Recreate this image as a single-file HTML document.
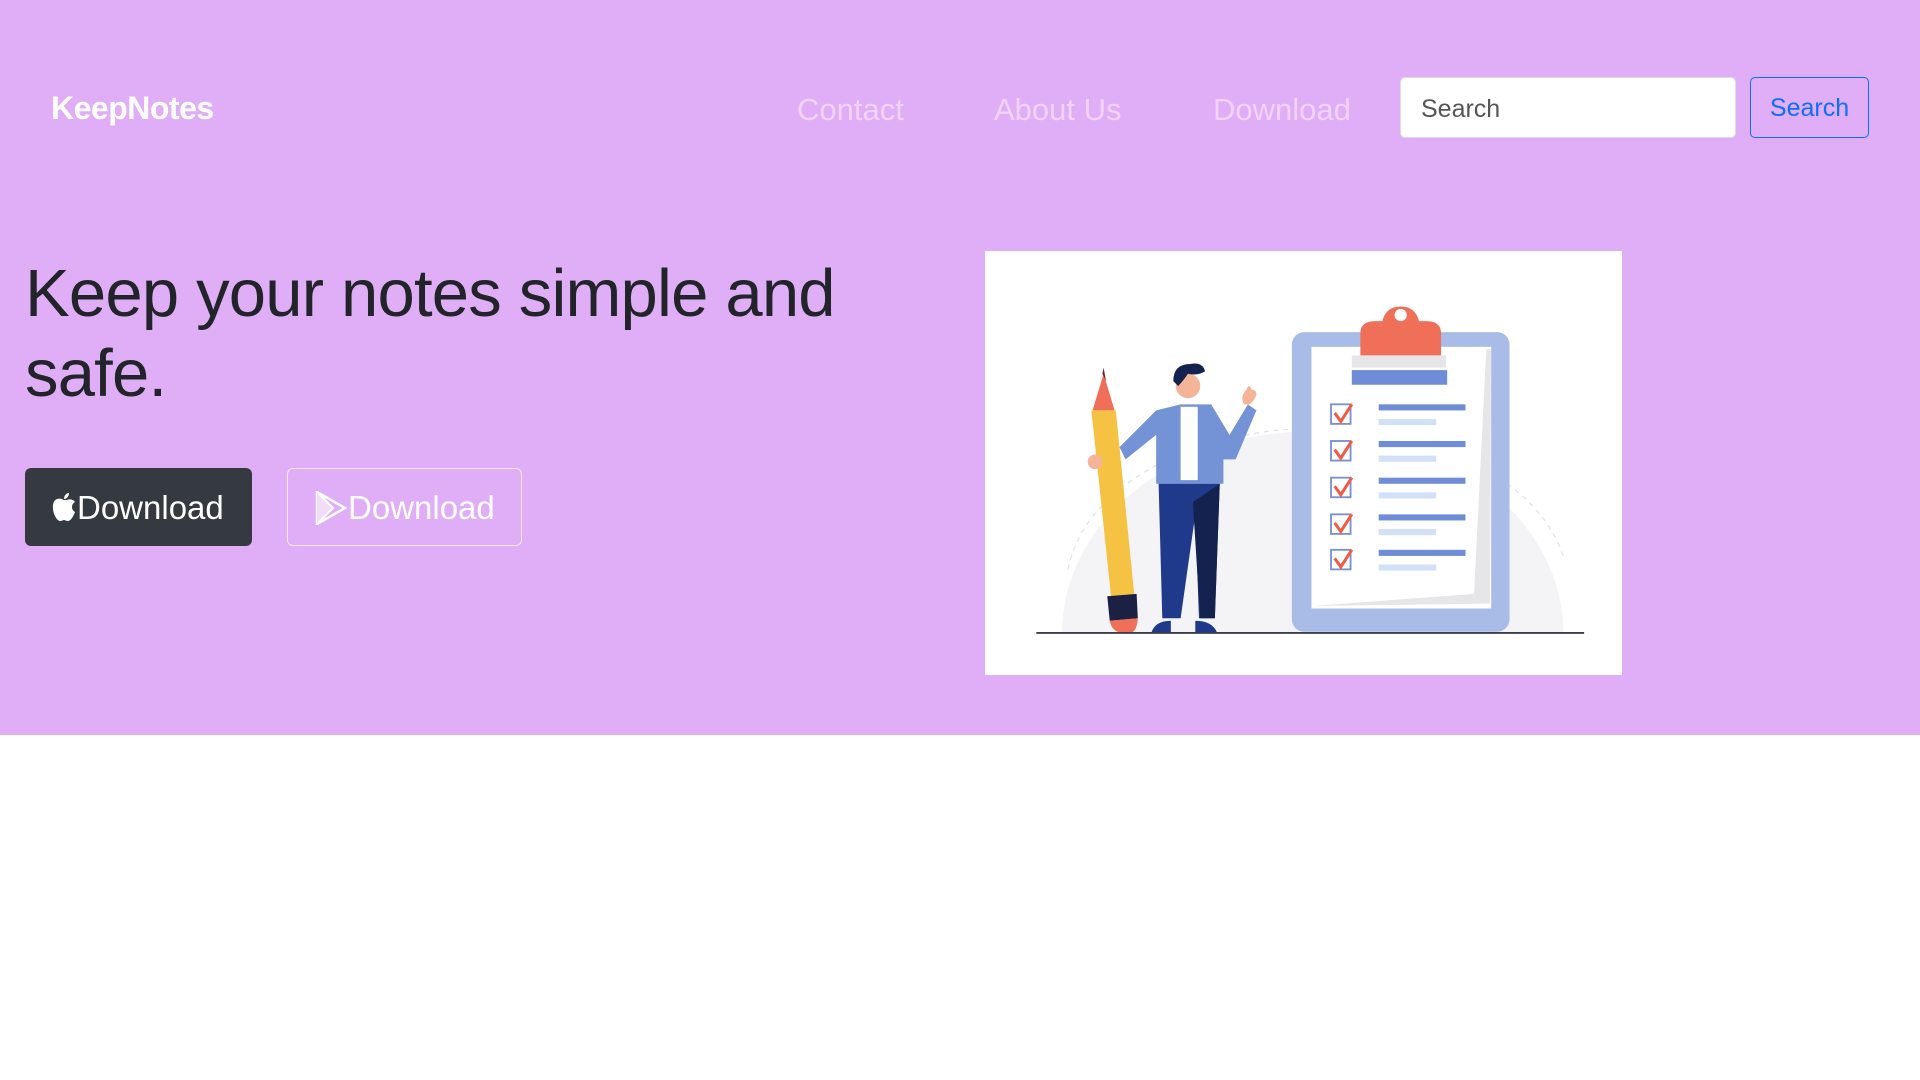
<!DOCTYPE html>
<html><head><meta charset="utf-8"><style>
*{margin:0;padding:0;box-sizing:border-box}
body{width:1920px;height:1080px;background:#fff;font-family:"Liberation Sans",sans-serif;position:relative;overflow:hidden}
.hero{position:absolute;left:0;top:0;width:1920px;height:735px;background:#e0adf7}
.brand{position:absolute;left:51px;top:90px;font-size:32px;font-weight:bold;color:#fff;letter-spacing:-0.5px}
.nav{position:absolute;top:92px;font-size:31px;color:#f1d3fb}
.inp{position:absolute;left:1400px;top:77px;width:336px;height:61px;background:#fff;border:1px solid #ddd;border-radius:5px;font-size:25px;color:#555;padding:17px 20px}
.sbtn{position:absolute;left:1750px;top:77px;width:119px;height:61px;border:1.5px solid #0d6efd;border-radius:5px;color:#0d6efd;font-size:25px;text-align:center;line-height:60px}
h1{position:absolute;left:25px;top:254px;font-size:67px;font-weight:normal;line-height:80px;color:#212529;width:900px;letter-spacing:-0.8px}
.b1{position:absolute;left:25px;top:468px;width:227px;height:78px;background:#343a40;border-radius:6px;color:#fff;font-size:33px;line-height:80px;padding-left:52px}
.b2{position:absolute;left:287px;top:468px;width:235px;height:78px;border:1.5px solid #f7e8fc;border-radius:6px;color:#fff;font-size:33px;line-height:78px;padding-left:60px}
.img{position:absolute;left:985px;top:251px;width:637px;height:424px;background:#fff}
</style></head><body>
<div class="hero">
<div class="brand">KeepNotes</div>
<div class="nav" style="left:797px">Contact</div>
<div class="nav" style="left:994px">About Us</div>
<div class="nav" style="left:1213px">Download</div>
<div class="inp">Search</div>
<div class="sbtn">Search</div>
<h1>Keep your notes simple and safe.</h1>
<div class="b1"><svg style="position:absolute;left:26px;top:24px" width="26" height="30" viewBox="0 0 26 30"><path d="M13 8C10 6 3 5 2 13c-1 8 4 16 7 16 2 0 3-1 4-1s2 1 4 1c3 0 6-6 7-9-4-2-4-8 0-10-2-3-6-3-8-2z" fill="#fff"/><path d="M13 7c0-3 2-6 5-6 0 3-2 6-5 6z" fill="#fff"/></svg>Download</div>
<div class="b2"><svg style="position:absolute;left:27px;top:22px" width="32" height="34" viewBox="0 0 32 34"><path d="M2 1L30 17 2 33z" fill="none" stroke="#fff" stroke-width="2.5"/><path d="M2 1L18 17 2 33M18 17" fill="#f3dcfb" stroke="#fff" stroke-width="2"/></svg>Download</div>
<div class="img"><svg width="637" height="424" viewBox="0 0 521 346">
<path d="M63 312 A205 165 0 0 1 473 312 Z" fill="#f4f3f5"/>
<path d="M68 260 A205 130 0 0 1 473 250" fill="none" stroke="#e2e2e6" stroke-dasharray="4 4"/>
<rect x="251" y="66" width="178" height="245" rx="10" fill="#a9bce8"/>
<rect x="267" y="78" width="147" height="214" fill="#fff"/>
<path d="M410 80 L414 80 L413 288 L268 290 L400 280 Z" fill="#e6e6e9"/>
<rect x="300" y="85" width="77" height="10" fill="#e6e6e9"/>
<path d="M307 85V67q0-10 12-10h6q3-12 15-12t15 12h6q12 0 12 10v18z" fill="#ef6f59"/>
<circle cx="340" cy="52" r="5" fill="#fff"/>
<rect x="300" y="97" width="78" height="12" fill="#6f8dd6"/>
<g id="r">
<rect x="283" y="125" width="16" height="16" fill="none" stroke="#7790d6" stroke-width="1.5"/>
<path d="M286 132l5 7 9-14" fill="none" stroke="#ef5b45" stroke-width="2.5"/>
<rect x="322" y="125" width="71" height="5" fill="#6f8dd6"/>
<rect x="322" y="137" width="47" height="5" fill="#d3e0fa"/>
</g>
<use href="#r" y="30"/><use href="#r" y="60"/><use href="#r" y="90"/><use href="#r" y="119"/>
<path d="M88 130 L97 100 L106 130 Z" fill="#ef6f59"/>
<path d="M96 100 L97 95 L99 106Z" fill="#6b2a1c"/>
<path d="M87 130 L107 130 L124 300 Q115 315 105 300 Z" fill="#f6c244"/>
<path d="M100 282 L124 280 L125 300 L102 302Z" fill="#1c2144"/>
<path d="M102 302 L125 300 Q124 315 114 312 Q104 312 102 302Z" fill="#ef6f59"/>
<circle cx="90" cy="172" r="6" fill="#f3b497"/>
<path d="M110 160 L140 130 L160 125 L185 125 L200 150 L215 125 L222 130 L205 170 L195 170 L195 190 L140 190 L140 150 L115 170Z" fill="#7393d6"/>
<rect x="160" y="127" width="14" height="60" fill="#fff"/>
<path d="M142 190 L192 190 L188 300 L175 300 L172 215 L160 300 L145 300Z" fill="#1f3a8a"/>
<path d="M170 205 L192 190 L188 300 L176 300Z" fill="#14224f"/>
<path d="M136 312 q3-10 16-10 l0 10z M172 302 q14 0 18 10 l-18 0z" fill="#1f3a8a"/>
<circle cx="166" cy="110" r="10" fill="#f3b497"/>
<path d="M154 106 q0-14 14-14 q10-2 12 6 q-6 4-14 2 q-4 6-8 10z" fill="#14224f"/>
<path d="M212 125 q-4-6 2-12 q2-6 4 0 q4 0 4 4 q-2 6-6 8z" fill="#f3b497"/>
<line x1="42" y1="312" x2="490" y2="312" stroke="#3b3f4c" stroke-width="1.5"/>
</svg></div>
</div>
</body></html>
